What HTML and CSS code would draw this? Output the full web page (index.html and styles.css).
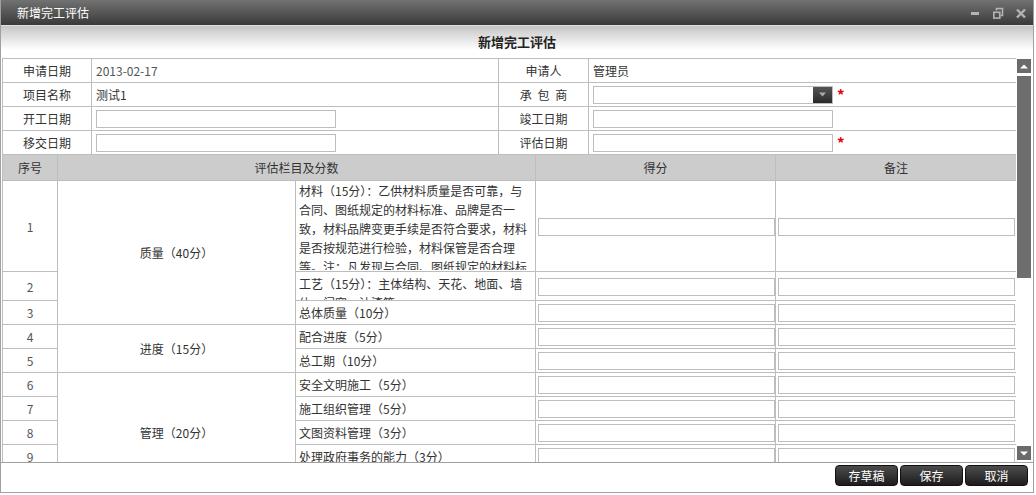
FILE: index.html
```html
<!DOCTYPE html>
<html lang="zh-CN">
<head>
    <meta charset="UTF-8">
    <title>新增完工评估</title>
    <link rel="stylesheet" href="styles.css">
</head>
<body>
<div class="window">
    <div class="titlebar">
        <span class="title">新增完工评估</span>
        <div class="win-tools">
            <svg width="12" height="12" viewBox="0 0 12 12"><rect x="2" y="5" width="8" height="3" fill="#b4b4b4"/></svg>
            <svg width="12" height="12" viewBox="0 0 12 12"><path d="M4.5 3.5V1.5H10.5V8.5H8.5" fill="none" stroke="#b4b4b4" stroke-width="1.6"/><rect x="1.8" y="5.3" width="6" height="5.8" fill="none" stroke="#b4b4b4" stroke-width="1.6"/></svg>
            <svg width="12" height="12" viewBox="0 0 12 12"><path d="M2 2.5L10 10.5M10 2.5L2 10.5" stroke="#b4b4b4" stroke-width="2.4"/></svg>
        </div>
    </div>

    <div class="caption">新增完工评估</div>

    <div class="content">
        <div class="scroll-view">
            <!-- 基本信息 -->
            <table class="form">
                <colgroup>
                    <col style="width:89px"><col style="width:407px"><col style="width:90px"><col style="width:428px">
                </colgroup>
                <tr>
                    <td class="label">申请日期</td>
                    <td class="value muted">2013-02-17</td>
                    <td class="label">申请人</td>
                    <td class="value">管理员</td>
                </tr>
                <tr>
                    <td class="label">项目名称</td>
                    <td class="value">测试1</td>
                    <td class="label spaced">承 包 商</td>
                    <td class="value">
                        <span class="select"><span class="arrow"><svg width="9" height="5" viewBox="0 0 9 5"><path d="M1 0.5H8L4.5 4.5Z" fill="#aaa"/></svg></span></span><span class="req">*</span>
                    </td>
                </tr>
                <tr>
                    <td class="label">开工日期</td>
                    <td class="value"><input class="field" type="text"></td>
                    <td class="label">竣工日期</td>
                    <td class="value"><input class="field" type="text"></td>
                </tr>
                <tr>
                    <td class="label">移交日期</td>
                    <td class="value"><input class="field" type="text"></td>
                    <td class="label">评估日期</td>
                    <td class="value"><input class="field" type="text"><span class="req">*</span></td>
                </tr>
            </table>

            <!-- 评估明细 -->
            <table class="grid">
                <colgroup>
                    <col style="width:55px"><col style="width:238px"><col style="width:240px"><col style="width:240px"><col style="width:241px">
                </colgroup>
                <tr class="head">
                    <th>序号</th>
                    <th colspan="2">评估栏目及分数</th>
                    <th>得分</th>
                    <th>备注</th>
                </tr>
                <tr class="tall">
                    <td class="no">1</td>
                    <td class="cat" rowspan="3">质量（40分）</td>
                    <td class="item top"><div class="clip h1">材料（15分）：乙供材料质量是否可靠，与合同、图纸规定的材料标准、品牌是否一致，材料品牌变更手续是否符合要求，材料是否按规范进行检验，材料保管是否合理等。注：凡发现与合同、图纸规定的材料标准、品牌不符的，该项不得分。</div></td>
                    <td class="score"><input class="cell-input" type="text"></td>
                    <td class="score"><input class="cell-input" type="text"></td>
                </tr>
                <tr class="mid">
                    <td class="no">2</td>
                    <td class="item top"><div class="clip h2">工艺（15分）：主体结构、天花、地面、墙体、门窗、油漆等；</div></td>
                    <td class="score"><input class="cell-input" type="text"></td>
                    <td class="score"><input class="cell-input" type="text"></td>
                </tr>
                <tr>
                    <td class="no">3</td>
                    <td class="item">总体质量（10分）</td>
                    <td class="score"><input class="cell-input" type="text"></td>
                    <td class="score"><input class="cell-input" type="text"></td>
                </tr>
                <tr>
                    <td class="no">4</td>
                    <td class="cat" rowspan="2">进度（15分）</td>
                    <td class="item">配合进度（5分）</td>
                    <td class="score"><input class="cell-input" type="text"></td>
                    <td class="score"><input class="cell-input" type="text"></td>
                </tr>
                <tr>
                    <td class="no">5</td>
                    <td class="item">总工期（10分）</td>
                    <td class="score"><input class="cell-input" type="text"></td>
                    <td class="score"><input class="cell-input" type="text"></td>
                </tr>
                <tr>
                    <td class="no">6</td>
                    <td class="cat" rowspan="5">管理（20分）</td>
                    <td class="item">安全文明施工（5分）</td>
                    <td class="score"><input class="cell-input" type="text"></td>
                    <td class="score"><input class="cell-input" type="text"></td>
                </tr>
                <tr>
                    <td class="no">7</td>
                    <td class="item">施工组织管理（5分）</td>
                    <td class="score"><input class="cell-input" type="text"></td>
                    <td class="score"><input class="cell-input" type="text"></td>
                </tr>
                <tr>
                    <td class="no">8</td>
                    <td class="item">文图资料管理（3分）</td>
                    <td class="score"><input class="cell-input" type="text"></td>
                    <td class="score"><input class="cell-input" type="text"></td>
                </tr>
                <tr>
                    <td class="no">9</td>
                    <td class="item">处理政府事务的能力（3分）</td>
                    <td class="score"><input class="cell-input" type="text"></td>
                    <td class="score"><input class="cell-input" type="text"></td>
                </tr>
                <tr>
                    <td class="no">10</td>
                    <td class="item">保修服务（4分）</td>
                    <td class="score"><input class="cell-input" type="text"></td>
                    <td class="score"><input class="cell-input" type="text"></td>
                </tr>
                <tr>
                    <td class="no">11</td>
                    <td class="cat" rowspan="3">配合（25分）</td>
                    <td class="item">现场配合（10分）</td>
                    <td class="score"><input class="cell-input" type="text"></td>
                    <td class="score"><input class="cell-input" type="text"></td>
                </tr>
                <tr>
                    <td class="no">12</td>
                    <td class="item">服务态度（10分）</td>
                    <td class="score"><input class="cell-input" type="text"></td>
                    <td class="score"><input class="cell-input" type="text"></td>
                </tr>
                <tr>
                    <td class="no">13</td>
                    <td class="item">其他（5分）</td>
                    <td class="score"><input class="cell-input" type="text"></td>
                    <td class="score"><input class="cell-input" type="text"></td>
                </tr>
            </table>
        </div>

        <div class="scrollbar">
            <div class="sb-btn"><svg width="8" height="5" viewBox="0 0 8 5"><path d="M0 4.5H8L4 0.5Z" fill="#fff"/></svg></div>
            <div class="sb-track"><div class="sb-thumb"></div></div>
            <div class="sb-btn"><svg width="8" height="5" viewBox="0 0 8 5"><path d="M0 0.5H8L4 4.5Z" fill="#fff"/></svg></div>
        </div>
    </div>

    <div class="footer">
        <button class="btn">存草稿</button>
        <button class="btn">保存</button>
        <button class="btn">取消</button>
    </div>
</div>
</body>
</html>
```

FILE: styles.css
```css
body {
    margin: 0;
    padding: 0;
    background: #fff;
    font-family: "Noto Sans CJK SC", "Liberation Sans", sans-serif;
    font-size: 12px;
    color: #333;
}
.window {
    width: 1032px;
    height: 492px;
    border: 1px solid #a0a0a0;
    border-top: 0;
    display: flex;
    flex-direction: column;
}
.titlebar {
    height: 25px;
    flex: none;
    display: flex;
    align-items: center;
    justify-content: space-between;
    background: linear-gradient(#727272, #3a3a3a);
    border-bottom: 1px solid #e0e0e0;
    padding: 0 6px 0 16px;
}
.titlebar .title {
    color: #fff;
    font-size: 12px;
}
.win-tools {
    display: flex;
    gap: 11px;
}
.caption {
    height: 32px;
    flex: none;
    line-height: 32px;
    text-align: center;
    font-size: 13px;
    font-weight: bold;
    color: #222;
    background: linear-gradient(#c6c6c6, #ffffff 75%);
}
.content {
    height: 404px;
    flex: none;
    display: flex;
}
.scroll-view {
    width: 1014px;
    padding-left: 1px;
    overflow: hidden;
}
table {
    border-collapse: collapse;
    table-layout: fixed;
    width: 1014px;
}
td, th {
    border: 1px solid #bdbdbd;
    padding: 0;
    font-weight: normal;
}
.form tr {
    height: 24px;
}
.form .label {
    text-align: center;
}
.form .label.spaced {
    word-spacing: 3px;
}
.form .value {
    padding-left: 4px;
}
.form .muted {
    color: #555;
}
.field {
    width: 240px;
    height: 18px;
    box-sizing: border-box;
    border: 1px solid #bdbdbd;
    margin: 0;
    padding: 0;
    vertical-align: middle;
}
.select {
    display: inline-flex;
    justify-content: flex-end;
    width: 240px;
    height: 18px;
    box-sizing: border-box;
    border: 1px solid #bdbdbd;
    vertical-align: middle;
}
.select .arrow {
    width: 19px;
    display: flex;
    align-items: center;
    justify-content: center;
    background: linear-gradient(#555, #2a2a2a);
}
.req {
    color: #e00;
    font-weight: bold;
    font-size: 15px;
    margin-left: 4px;
    vertical-align: middle;
}
.grid {
    margin-top: -1px;
}
.grid .head {
    height: 26px;
}
.grid th {
    background: #cccccc;
    color: #333;
}
.grid tr {
    height: 24px;
}
.grid tr.tall {
    height: 91px;
}
.grid tr.mid {
    height: 29px;
}
.grid .no {
    text-align: center;
    color: #555;
}
.grid .cat {
    text-align: center;
}
.grid .item {
    padding: 0 2px 0 3px;
}
.grid .item.top {
    vertical-align: top;
}
.clip {
    overflow: hidden;
    line-height: 19px;
    box-sizing: border-box;
}
.clip.h1 {
    height: 89px;
}
.clip.h2 {
    height: 28px;
    padding-top: 2px;
}
.score {
    padding-left: 2px;
    overflow: hidden;
}
.cell-input {
    width: 237px;
    height: 18px;
    box-sizing: border-box;
    border: 1px solid #bdbdbd;
    margin: 0;
    padding: 0;
    vertical-align: middle;
}
.scrollbar {
    width: 14px;
    padding: 1px 2px 2px 1px;
    display: flex;
    flex-direction: column;
}
.sb-btn {
    height: 14px;
    background: #6b6b6b;
    display: flex;
    align-items: center;
    justify-content: center;
}
.sb-track {
    flex: 1;
    padding-top: 3px;
}
.sb-thumb {
    height: 202px;
    background: #6e6e6e;
}
.footer {
    flex: 1;
    border-top: 1px solid #a0a0a0;
    display: flex;
    justify-content: flex-end;
    align-items: flex-start;
    gap: 2px;
    padding: 2px 5px 0 0;
}
.btn {
    width: 63px;
    height: 21px;
    border: 1px solid #111;
    border-radius: 4px;
    background: linear-gradient(#4c4c4c, #1c1c1c);
    color: #fff;
    font-family: "Noto Sans CJK SC", sans-serif;
    font-size: 12px;
    padding: 0;
    cursor: pointer;
}
```
